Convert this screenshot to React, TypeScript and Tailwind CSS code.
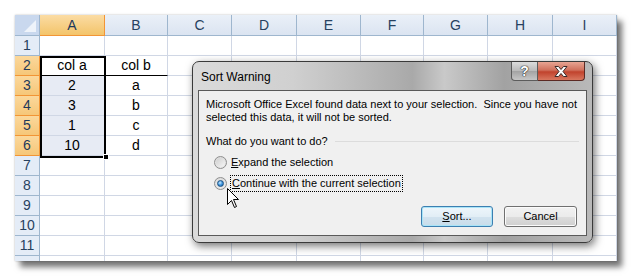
import React from "react"

const cols = ["A", "B", "C", "D", "E", "F", "G", "H", "I"]
const rows = [1, 2, 3, 4, 5, 6, 7, 8, 9, 10, 11, 12]
const data: Record<number, string[]> = {
  2: ["col a", "col b"],
  3: ["2", "a"],
  4: ["3", "b"],
  5: ["1", "c"],
  6: ["10", "d"],
}

function Radio({ checked }: { checked?: boolean }) {
  return (
    <span className="flex h-[13px] w-[13px] items-center justify-center rounded-full border border-[#8f8f8f] bg-[radial-gradient(circle_at_50%_60%,#f4f4f4_0%,#e2e2e2_60%,#cfcfcf_100%)]">
      {checked ? (
        <span className="h-[7px] w-[7px] rounded-full border border-[#1c5180] bg-[radial-gradient(circle_at_40%_35%,#cdeaff_0%,#3e95dd_50%,#1b5fa6_100%)]" />
      ) : (
        <span className="h-[9px] w-[9px] rounded-full bg-[linear-gradient(135deg,#cfcfcf,#f6f6f6)]" />
      )}
    </span>
  )
}

export default function App() {
  return (
    <div className="relative h-[277px] w-[635px] overflow-hidden bg-white pl-[15px] pt-[15px] font-['Liberation_Sans',Arial,sans-serif]">

      {/* sheet */}
      <div className="relative h-[246px] w-[602px] overflow-hidden bg-white shadow-[5px_6px_6px_rgba(0,0,0,0.55),0_0_2px_rgba(0,0,0,0.25)]">
        <div className="grid grid-cols-[25px_65px_63px_64px_65px_64px_63px_64px_65px_64px] grid-rows-[21px_repeat(12,20px)] text-[14px]">
          {/* corner */}
          <div className="relative border-r border-b border-[#9eb6ce] bg-[#c9d8ee]">
            <svg className="absolute bottom-[3px] right-[3px]" width="12" height="12" viewBox="0 0 12 12">
              <path d="M12 0 L12 12 L0 12 Z" fill="#eef3fa" />
            </svg>
          </div>
          {cols.map((c) => (
            <div
              key={c}
              className={
                c === "A"
                  ? "flex items-center justify-center border-r border-b border-[#f29536] bg-[linear-gradient(#fbdca4,#f3c46a)] text-[#1e395b]"
                  : "flex items-center justify-center border-r border-b border-[#9eb6ce] bg-[linear-gradient(#eaf0f8,#dbe4f1)] text-[#27415f]"
              }
            >
              {c}
            </div>
          ))}

          {rows.map((r) => {
            const sel = r >= 2 && r <= 6
            return (
              <React.Fragment key={r}>
                <div
                  className={
                    sel
                      ? "flex items-center justify-center border-r border-b border-[#f29536] bg-[linear-gradient(#fbd89c,#f6c779)] text-[#1e395b]"
                      : "flex items-center justify-center border-r border-b border-[#9eb6ce] bg-[#e4ecf7] text-[#27415f]"
                  }
                >
                  {r < 12 ? r : ""}
                </div>
                {cols.map((c, i) => {
                  const v = data[r]?.[i] ?? ""
                  let cls = "flex items-center justify-center border-r border-b border-[#d0d7e5] text-black"
                  if (r === 2 && i < 2) cls = "flex items-center justify-center border-r border-b border-r-[#d0d7e5] border-b-black text-black"
                  if (i === 0 && r >= 3 && r <= 6) cls += " bg-[#e7ebf4]"
                  return (
                    <div key={c} className={cls}>
                      {v}
                    </div>
                  )
                })}
              </React.Fragment>
            )
          })}
        </div>

        {/* selection box A2:A6 */}
        <div className="absolute left-[25px] top-[41px] h-[102px] w-[66px] border-[2px] border-black" />
        <div className="absolute left-[88px] top-[139px] h-[6px] w-[6px] border border-white bg-black" />
      </div>

      {/* dialog */}
      <div className="absolute left-[192px] top-[61px] flex h-[182px] w-[401px] flex-col rounded-[7px] border border-[#3a3a3a] bg-[linear-gradient(90deg,#dadada_0%,#d0d0d0_25%,#bdbdbd_40%,#a9a9a9_55%,#c9c9c9_63%,#a2a2a2_78%,#b9b9b9_100%)] shadow-[2px_3px_8px_rgba(0,0,0,0.55)] font-['Liberation_Sans',Tahoma,sans-serif]">
        <div className="flex h-[28px] items-start">
          <span className="pl-[8px] pt-[7px] text-[12px] leading-[16px] text-black">Sort Warning</span>
          <div className="ml-auto mr-[7px] flex">
            <div className="flex h-[19px] w-[27px] items-center justify-center rounded-bl-[4px] border border-t-0 border-[#5c5c5c] bg-[linear-gradient(#dcdcdc,#b9b9b9_50%,#a3a3a3_51%,#c6c6c6)] text-[14px] font-bold text-white [text-shadow:0_0_1px_#222,0_0_1px_#222,0_0_1px_#222]">
              ?
            </div>
            <div className="flex h-[19px] w-[47px] items-center justify-center rounded-br-[4px] border border-t-0 border-l-0 border-[#5c2a24] bg-[linear-gradient(#e8a593,#d0705c_45%,#c1432d_55%,#d8775f)]">
              <svg width="16" height="13" viewBox="0 0 16 13">
                <path d="M2 1.5 L5.5 1.5 L8 4.5 L10.5 1.5 L14 1.5 L10 6.5 L14 11.5 L10.5 11.5 L8 8.5 L5.5 11.5 L2 11.5 L6 6.5 Z" fill="#fff" stroke="#3b2a28" strokeWidth="1" strokeLinejoin="round" />
              </svg>
            </div>
          </div>
        </div>

        <div className="mx-[5px] mb-[6px] flex flex-1 flex-col border border-[#5a5a5a] bg-[#f0f0f0] px-[7px] pt-[7px] pb-[8px] text-[11px] leading-[13px] text-black">
          <p className="whitespace-pre">Microsoft Office Excel found data next to your selection.  Since you have not</p>
          <p>selected this data, it will not be sorted.</p>

          <div className="mt-[11px] flex items-center">
            <span>What do you want to do?</span>
            <div className="ml-[7px] h-px flex-1 bg-[#dcdcdc]" />
          </div>

          <div className="mt-[8px] ml-[8px] flex flex-col gap-[6px]">
            <label className="flex items-center gap-[3px]">
              <Radio />
              <span className="px-[1px]"><span className="underline">E</span>xpand the selection</span>
            </label>
            <label className="flex items-center gap-[3px]">
              <Radio checked />
              <span className="border border-dotted border-black px-[1px] leading-[15px]"><span className="underline">C</span>ontinue with the current selection</span>
            </label>
          </div>

          <div className="mt-auto flex justify-end gap-[11px] pr-[2px]">
            <button className="h-[21px] w-[72px] rounded-[3px] border border-[#3c7fb1] bg-[linear-gradient(#eef6fb,#e2eef6_50%,#d2e3ef_51%,#c8dcea)] shadow-[inset_0_0_0_1px_#a9e4f7]">
              <span className="underline">S</span>ort...
            </button>
            <button className="h-[21px] w-[73px] rounded-[3px] border border-[#707070] bg-[linear-gradient(#f2f2f2,#ebebeb_50%,#dddddd_51%,#cfcfcf)] shadow-[inset_0_0_0_1px_#fbfbfb]">
              Cancel
            </button>
          </div>
        </div>
      </div>

      {/* mouse cursor */}
      <svg className="absolute left-[227px] top-[188px]" width="13" height="21" viewBox="0 0 13 21">
        <path d="M0.5 0.5 L0.5 16.5 L4.5 12.5 L7.5 19.5 L9.5 18.5 L6.5 11.5 L11.5 11.5 Z" fill="#fff" stroke="#000" strokeWidth="1" strokeLinejoin="round" />
      </svg>
    </div>
  )
}
